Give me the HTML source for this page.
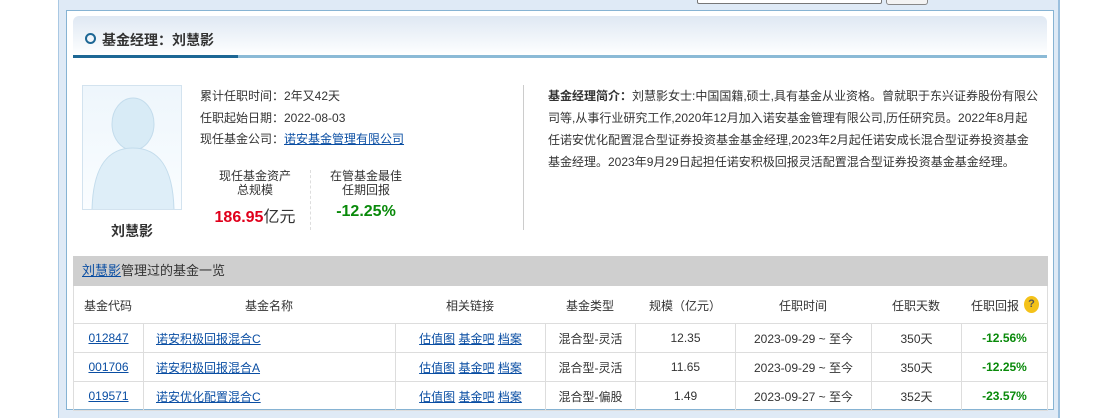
<!DOCTYPE html>
<html><head><meta charset="utf-8"><style>
*{margin:0;padding:0;box-sizing:border-box}
body{width:1120px;height:400px;background:#fff;overflow:hidden;font-family:"Liberation Sans","Noto Sans CJK SC",sans-serif;font-size:12px;color:#333;position:relative}
.outer{position:absolute;left:58px;top:-2px;width:1002px;height:420px;background:#dfeaf6;border-left:1px solid #a9c8e3;border-right:2px solid #9cc0de}
.inp{position:absolute;left:697px;top:-4px;width:185px;height:8px;background:#fff;border:1px solid #777;border-radius:2px}
.btn{position:absolute;left:886px;top:-4px;width:42px;height:9px;background:#f3f3f3;border:1px solid #888;border-radius:3px}
.panel{position:absolute;left:66px;top:10px;width:988px;height:400px;background:#fff;border:1px solid #86b3d3}
.hd{position:absolute;left:73px;top:16px;width:974px;height:42px;border-radius:6px 6px 0 0;background:linear-gradient(#dfe8f3,#f6f9fc 75%,#fff);border-bottom:3px solid #8bbad6}
.hd .dk{position:absolute;left:0;bottom:-3px;width:165px;height:3px;background:#1d6795}
.hd .c{position:absolute;left:12px;top:17px;width:11px;height:11px;border:2px solid #1d6795;border-radius:50%}
.hd .t{position:absolute;left:29px;top:14px;font-size:14px;font-weight:bold;color:#333}
a{color:#0a4ea3;text-decoration:underline}
.abs{position:absolute}
.photo{left:82px;top:85px;width:100px;height:125px;border:1px solid #d3e3ef;background:linear-gradient(#eef6fc,#fafdff);overflow:hidden}
.info div{height:21.5px}
.tbl{position:absolute;left:73px;top:256px;width:975px;border-collapse:collapse}
.tbl td{border:1px solid #ddd;text-align:center;height:29px}
.intro div{white-space:nowrap}
</style></head><body>
<div class="outer"></div>
<div class="inp"></div><div class="btn"></div>
<div class="panel"></div>
<div class="hd"><div class="dk"></div><div class="c"></div><div class="t">基金经理：刘慧影</div></div>

<div class="abs photo"><svg width="100" height="125"><ellipse cx="50" cy="38" rx="21" ry="26" fill="#d8ebf6" stroke="#c3dcec"/><path d="M9 124 C10 80 25 62 50 62 C75 62 90 80 91 124 Z" fill="#deeef8" stroke="#c3dcec"/></svg></div>
<div class="abs" style="left:82px;top:221px;width:100px;text-align:center;font-size:14px;font-weight:bold">刘慧影</div>

<div class="abs info" style="left:200px;top:88px;line-height:16px">
<div>累计任职时间：2年又42天</div>
<div>任职起始日期：2022-08-03</div>
<div>现任基金公司：<a>诺安基金管理有限公司</a></div>
</div>
<div class="abs" style="left:205px;top:169px;width:100px;text-align:center;line-height:14px">现任基金资产<br>总规模</div>
<div class="abs" style="left:205px;top:203px;width:100px;text-align:center;font-size:16px"><b style="color:#e0001b">186.95</b>亿元</div>
<div class="abs" style="left:310px;top:170px;height:60px;border-left:1px dashed #ddd"></div>
<div class="abs" style="left:316px;top:169px;width:100px;text-align:center;line-height:14px">在管基金最佳<br>任期回报</div>
<div class="abs" style="left:316px;top:203px;width:100px;text-align:center;font-size:16px;font-weight:bold;color:#098a0a">-12.25%</div>
<div class="abs" style="left:523px;top:85px;height:145px;border-left:1px solid #ccc"></div>
<div class="abs intro" style="left:548px;top:85px;width:495px;line-height:22px">
<div><b>基金经理简介：</b>刘慧影女士:中国国籍,硕士,具有基金从业资格。曾就职于东兴证券股份有限公</div>
<div>司等,从事行业研究工作,2020年12月加入诺安基金管理有限公司,历任研究员。2022年8月起</div>
<div>任诺安优化配置混合型证券投资基金基金经理,2023年2月起任诺安成长混合型证券投资基金</div>
<div>基金经理。2023年9月29日起担任诺安积极回报灵活配置混合型证券投资基金基金经理。</div>
</div>

<div class="abs" style="left:73px;top:256px;width:975px;height:30px;background:#cfcfcf;font-size:13px;line-height:30px;padding-left:9px"><a>刘慧影</a>管理过的基金一览</div>
<div class="abs" style="left:73px;top:286px;width:975px;height:37px;border-left:1px solid #ddd;border-right:1px solid #ddd"></div>
<div class="abs" style="top:297px;left:73px;width:975px;height:16px">
<span class="abs" style="left:0;width:70px;text-align:center">基金代码</span>
<span class="abs" style="left:70px;width:252px;text-align:center">基金名称</span>
<span class="abs" style="left:322px;width:150px;text-align:center">相关链接</span>
<span class="abs" style="left:472px;width:90px;text-align:center">基金类型</span>
<span class="abs" style="left:562px;width:100px;text-align:center">规模（亿元）</span>
<span class="abs" style="left:662px;width:136px;text-align:center">任职时间</span>
<span class="abs" style="left:798px;width:90px;text-align:center">任职天数</span>
<span class="abs" style="left:898px;width:60px">任职回报</span>
<span class="abs" style="left:951px;top:-1px;width:15px;height:17px;border-radius:50%;background:#f4c21a;color:#555;font-size:11px;font-weight:bold;text-align:center;line-height:17px">?</span>
</div>
<table class="tbl" style="top:323px">
<tr><td style="width:70px"><a>012847</a></td><td style="width:252px;text-align:left;padding-left:12px"><a>诺安积极回报混合C</a></td><td style="width:150px"><a>估值图</a> <a>基金吧</a> <a>档案</a></td><td style="width:90px">混合型-灵活</td><td style="width:100px">12.35</td><td style="width:136px">2023-09-29 ~ 至今</td><td style="width:90px">350天</td><td style="color:#098a0a;font-weight:bold">-12.56%</td></tr>
<tr><td><a>001706</a></td><td style="text-align:left;padding-left:12px"><a>诺安积极回报混合A</a></td><td><a>估值图</a> <a>基金吧</a> <a>档案</a></td><td>混合型-灵活</td><td>11.65</td><td>2023-09-29 ~ 至今</td><td>350天</td><td style="color:#098a0a;font-weight:bold">-12.25%</td></tr>
<tr><td><a>019571</a></td><td style="text-align:left;padding-left:12px"><a>诺安优化配置混合C</a></td><td><a>估值图</a> <a>基金吧</a> <a>档案</a></td><td>混合型-偏股</td><td>1.49</td><td>2023-09-27 ~ 至今</td><td>352天</td><td style="color:#098a0a;font-weight:bold">-23.57%</td></tr>
</table>
</body></html>
